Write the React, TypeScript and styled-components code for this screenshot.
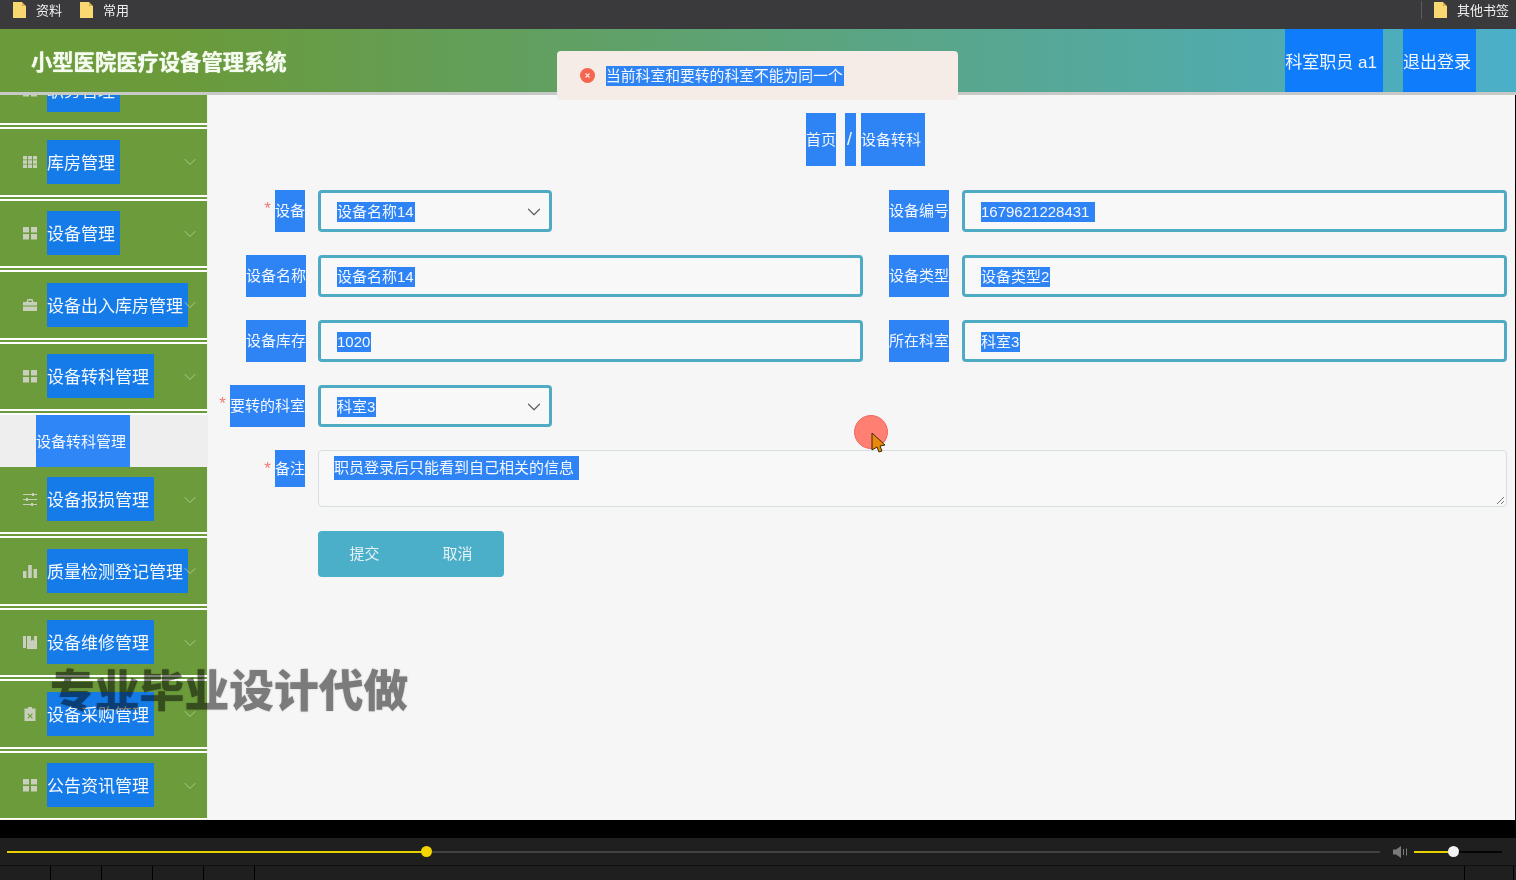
import React from 'react'
import styled, { createGlobalStyle } from 'styled-components'
import { ChevronDown } from 'lucide-react'

const GlobalStyle = createGlobalStyle`
    html, body {
        margin: 0;
        padding: 0;
        background: #000;
    }
    * {
        box-sizing: border-box;
    }
    body {
        font-family: "Liberation Sans", "Noto Sans CJK SC", sans-serif;
    }
`

const Page = styled.div`
    position: relative;
    width: 1516px;
    height: 880px;
    overflow: hidden;
    display: flex;
    flex-direction: column;
`

const BookmarkBar = styled.div`
    height: 29px;
    padding: 0 7px 10px 13px;
    background: #3a393b;
    display: flex;
    align-items: center;
    color: #eeeeee;
    font-size: 13px;
`

const Bookmark = styled.div<{ $last?: boolean }>`
    display: flex;
    align-items: center;
    gap: 10px;
    margin-right: ${props => (props.$last ? 0 : 18)}px;
`

const BarDivider = styled.div`
    width: 1px;
    height: 18px;
    background: #5c5b5d;
    margin-left: auto;
    margin-right: 12px;
`

const Header = styled.header`
    height: 66px;
    flex-shrink: 0;
    padding-left: 31px;
    padding-right: 40px;
    background: linear-gradient(90deg, #6a9a3a 0%, #6a9a3a 12%, #4bafc9 100%);
    border-bottom: 3px solid #c6c9c6;
    display: flex;
    align-items: stretch;
    justify-content: space-between;
`

const Title = styled.h1`
    margin: 0;
    align-self: center;
    color: #f6fbef;
    font-size: 21.3px;
    font-weight: 700;
    text-shadow: 0 0 1px #ffffff;
`

const HeaderActions = styled.div`
    display: flex;
    gap: 20px;
`

const HeaderLink = styled.div<{ $pad: number }>`
    background: #0f7dfb;
    color: #f2f7ff;
    font-size: 17px;
    padding-right: ${props => props.$pad}px;
    display: flex;
    align-items: center;
    white-space: pre;
`

const Main = styled.div`
    flex: 1;
    min-height: 0;
    display: flex;
`

const Sidebar = styled.aside`
    width: 208px;
    flex-shrink: 0;
    overflow: hidden;
    border-right: 1px solid #eef0ea;
    border-bottom: 1px solid #eef0d8;
    background: #6c9b3b;
`

const MenuList = styled.div`
    margin-top: -37.5px;
`

const MenuItem = styled.div`
    position: relative;
    height: 71.5px;
    padding-left: 23px;
    background: #6c9b3b;
    border-bottom: 6px double #ffffff;
    display: flex;
    align-items: center;
    gap: 10px;
`

const MenuIcon = styled.svg`
    width: 14px;
    height: 14px;
    flex-shrink: 0;
    fill: #c8cfbd;
`

const MenuLabel = styled.span`
    height: 44px;
    padding-right: 5px;
    background: #147be8;
    color: #f4f8fd;
    font-size: 17px;
    line-height: 47px;
    white-space: nowrap;
`

const MenuArrow = styled.span`
    position: absolute;
    right: 7px;
    top: 23px;
    display: flex;
    color: #b9d1a0;
`

const SubMenu = styled.div`
    height: 51.5px;
    padding-left: 36px;
    background: #eeeeee;
    display: flex;
`

const SubLabel = styled.span`
    width: 94px;
    background: #2f86f7;
    color: #f4f8fd;
    font-size: 15px;
    line-height: 53px;
    white-space: nowrap;
`

const Content = styled.main`
    flex: 1;
    min-width: 0;
    padding: 18px 8px 0 0;
    background: #f6f6f6;
    border-right: 1px solid #000;
`

const Breadcrumb = styled.nav`
    height: 53px;
    margin-bottom: 24px;
    padding-left: 598px;
    display: flex;
`

const Crumb = styled.span<{ $gap?: number; $width: number }>`
    width: ${props => props.$width}px;
    margin-left: ${props => props.$gap ?? 0}px;
    background: #2f84f5;
    color: #f2f7ff;
    font-size: 15px;
    line-height: 53px;
    white-space: nowrap;
`

const SlashCrumb = styled(Crumb)`
    padding-left: 2px;
    font-size: 18px;
`

const Form = styled.form`
    display: flex;
    flex-direction: column;
    gap: 23px;
`

const FormRow = styled.div`
    display: grid;
    grid-template-columns: 655px 617px;
    column-gap: 27px;
`

const Field = styled.div<{ $labelWidth: number }>`
    display: grid;
    grid-template-columns: ${props => props.$labelWidth}px 1fr;
    column-gap: 13px;
`

const LabelCell = styled.div`
    display: flex;
    justify-content: flex-end;
    align-items: flex-start;
`

const Required = styled.span`
    color: #ef7a70;
    font-size: 17px;
    line-height: 18px;
    margin: 10px 4px 0 0;
`

const Label = styled.label<{ $tall?: boolean; $flush?: boolean }>`
    height: ${props => (props.$tall ? 37 : 42)}px;
    margin-right: ${props => (props.$flush ? -1 : 0)}px;
    background: #2f84f5;
    color: #f2f7ff;
    font-size: 15px;
    line-height: ${props => (props.$tall ? 37 : 42)}px;
    white-space: nowrap;
`

const TextBox = styled.div<{ $short?: boolean }>`
    width: ${props => (props.$short ? '234px' : '100%')};
    height: 42px;
    padding: 2px 4px 0 16px;
    background: #f8f8f8;
    border: 3px solid #4fabc3;
    border-radius: 4px;
    display: flex;
    align-items: center;
    justify-content: space-between;
    color: #606266;
`

const Selected = styled.span`
    padding-right: 1px;
    background: #2f84f5;
    color: #f4f8ff;
    font-size: 15px;
    line-height: 20px;
    white-space: pre;
`

const Remark = styled.div`
    position: relative;
    height: 57px;
    padding: 5px 15px;
    background: #f8f8f8;
    border: 1px solid #d6dfe3;
    border-radius: 4px;
`

const RemarkText = styled(Selected)`
    display: inline-block;
    line-height: 24px;
`

const ResizeGrip = styled.svg`
    position: absolute;
    right: 1px;
    bottom: 1px;
    width: 9px;
    height: 9px;
    stroke: #777777;
    fill: none;
`

const ButtonRow = styled.div`
    padding-left: 110px;
    margin-top: 1px;
    display: flex;
`

const ActionButton = styled.button`
    width: 93px;
    height: 46px;
    padding: 0 0 3px;
    border: none;
    background: #4bafc9;
    color: #e6f2f5;
    font-family: inherit;
    font-size: 15px;
    &:first-child {
        border-radius: 4px 0 0 4px;
    }
    &:last-child {
        border-radius: 0 4px 4px 0;
    }
`

const Toast = styled.div`
    position: absolute;
    left: 557px;
    top: 51px;
    width: 401px;
    height: 49px;
    padding-left: 23px;
    background: #f5ebe7;
    border-radius: 4px;
    display: flex;
    align-items: center;
    gap: 11px;
`

const ToastText = styled(Selected)`
    font-size: 14.8px;
`

const ToastIcon = styled.svg`
    width: 15px;
    height: 15px;
    flex-shrink: 0;
`

const Watermark = styled.div`
    position: absolute;
    left: 50px;
    top: 658px;
    color: #808080;
    font-family: "Noto Sans CJK SC", sans-serif;
    font-size: 44.8px;
    font-weight: 900;
    line-height: 60px;
    white-space: nowrap;
    mix-blend-mode: multiply;
    text-shadow: 0 0 2px #c8c8c8;
`

const CursorHalo = styled.div`
    position: absolute;
    left: 854px;
    top: 415px;
    width: 34px;
    height: 34px;
    border-radius: 50%;
    background: #ff7f72;
    border: 1px solid #ee6a60;
`

const CursorArrow = styled.svg`
    position: absolute;
    left: 871px;
    top: 432px;
    width: 15px;
    height: 21px;
`

const BlackGap = styled.div`
    height: 18px;
    flex-shrink: 0;
    background: #000;
`

const Player = styled.div`
    height: 27px;
    flex-shrink: 0;
    padding: 0 14px 0 7px;
    background: #1f1f1f;
    display: flex;
    align-items: center;
`

const Track = styled.div`
    position: relative;
    height: 2px;
`

const SeekTrack = styled(Track)`
    width: 1373px;
    background: #414141;
`

const VolumeTrack = styled(Track)`
    width: 88px;
    margin-left: 7px;
    background: #050505;
`

const TrackFill = styled.div<{ $width: number }>`
    width: ${props => props.$width}px;
    height: 100%;
    background: #e8cf00;
`

const Knob = styled.div<{ $left: number; $color: string }>`
    position: absolute;
    left: ${props => props.$left}px;
    top: -5px;
    width: 11px;
    height: 11px;
    border-radius: 50%;
    background: ${props => props.$color};
`

const VolumeIcon = styled.svg`
    width: 14px;
    height: 14px;
    margin-left: 13px;
    fill: #7a7a7a;
`

const BottomBar = styled.div`
    height: 15px;
    flex-shrink: 0;
    background: #1f1f1f;
    border-top: 1px solid #111111;
    display: flex;
`

const BottomCell = styled.div`
    width: 51px;
    border-right: 1px solid #000;
`

const BottomEnd = styled.div`
    width: 50px;
    margin-left: auto;
    margin-right: 2px;
    border-left: 1px solid #000;
    border-right: 1px solid #000;
`

function Folder() {
    return (
        <svg width="13" height="16" viewBox="0 0 13 16">
            <path d="M0 0h9v3l1 1h3v12H0z" fill="#f9d871" />
            <path d="M9 0v3l1 1h3z" fill="#e0b850" />
        </svg>
    )
}

type IconKind = 'dense' | 'grid' | 'case' | 'sliders' | 'bars' | 'book' | 'clip'

const iconPaths: Record<IconKind, string> = {
    dense: 'M0 1h4v3.5H0zM5 1h4v3.5H5zM10 1h4v3.5h-4zM0 5.3h4v3.5H0zM5 5.3h4v3.5H5zM10 5.3h4v3.5h-4zM0 9.6h4v3.5H0zM5 9.6h4v3.5H5zM10 9.6h4v3.5h-4z',
    grid: 'M0 1h6v5.5H0zM8 1h6v5.5H8zM0 8h6v5.5H0zM8 8h6v5.5H8z',
    case: 'M4.5 1h5l1 3H14v3.5H0V4h3.5zM5.5 2.4 5 4h4l-.5-1.6zM0 8.5h14V13H0z',
    sliders: 'M0 2h9V1h2v1h3v1h-3v1H9V3H0zM0 7h3V6h2v1h9v1H5v1H3V8H0zM0 12h8v-1h2v1h4v1h-4v1H8v-1H0z',
    bars: 'M0 7h3.5v7H0zM5.2 1h3.6v13H5.2zM10.5 5H14v9h-3.5z',
    book: 'M0 1h3v12H0zM4 1h4v5l1.5-1.5L11 6V1h3v13H4z',
    clip: 'M5 0h4v1.5h3.5V14h-11V1.5H5zM5.2 6.2 4.4 7 6.3 9l-1.900 2 .8.8L7.100 9.800l1.900 2 .8-.8L7.900 9l1.900-2-.8-.8-1.900 2z',
}

const menus: { kind: IconKind; text: string; open?: boolean }[] = [
    { kind: 'grid', text: '职务管理' },
    { kind: 'dense', text: '库房管理' },
    { kind: 'grid', text: '设备管理' },
    { kind: 'case', text: '设备出入库房管理' },
    { kind: 'grid', text: '设备转科管理', open: true },
    { kind: 'sliders', text: '设备报损管理' },
    { kind: 'bars', text: '质量检测登记管理' },
    { kind: 'book', text: '设备维修管理' },
    { kind: 'clip', text: '设备采购管理' },
    { kind: 'grid', text: '公告资讯管理' },
]

function App() {
    return (
        <Page>
            <GlobalStyle />
            <BookmarkBar>
                <Bookmark><Folder />资料</Bookmark>
                <Bookmark><Folder />常用</Bookmark>
                <BarDivider />
                <Bookmark $last><Folder />其他书签</Bookmark>
            </BookmarkBar>
            <Header>
                <Title>小型医院医疗设备管理系统</Title>
                <HeaderActions>
                    <HeaderLink $pad={6}>科室职员 a1</HeaderLink>
                    <HeaderLink $pad={5}>退出登录</HeaderLink>
                </HeaderActions>
            </Header>
            <Main>
                <Sidebar>
                    <MenuList>
                        {menus.map(menu => (
                            <React.Fragment key={menu.text}>
                                <MenuItem>
                                    <MenuIcon viewBox="0 0 14 14">
                                        <path d={iconPaths[menu.kind]} fillRule="evenodd" />
                                    </MenuIcon>
                                    <MenuLabel>{menu.text}</MenuLabel>
                                    <MenuArrow><ChevronDown size={20} strokeWidth={1} /></MenuArrow>
                                </MenuItem>
                                {menu.open && (
                                    <SubMenu><SubLabel>{menu.text}</SubLabel></SubMenu>
                                )}
                            </React.Fragment>
                        ))}
                    </MenuList>
                </Sidebar>
                <Content>
                    <Breadcrumb>
                        <Crumb $width={30}>首页</Crumb>
                        <SlashCrumb $width={11} $gap={9}>/</SlashCrumb>
                        <Crumb $width={64} $gap={5}>设备转科</Crumb>
                    </Breadcrumb>
                    <Form>
                        <FormRow>
                            <Field $labelWidth={97}>
                                <LabelCell><Required>*</Required><Label>设备</Label></LabelCell>
                                <TextBox $short>
                                    <Selected>设备名称14</Selected>
                                    <ChevronDown size={22} strokeWidth={1.3} />
                                </TextBox>
                            </Field>
                            <Field $labelWidth={59}>
                                <LabelCell><Label>设备编号</Label></LabelCell>
                                <TextBox><Selected>1679621228431 </Selected></TextBox>
                            </Field>
                        </FormRow>
                        <FormRow>
                            <Field $labelWidth={97}>
                                <LabelCell><Label $flush>设备名称</Label></LabelCell>
                                <TextBox><Selected>设备名称14</Selected></TextBox>
                            </Field>
                            <Field $labelWidth={59}>
                                <LabelCell><Label>设备类型</Label></LabelCell>
                                <TextBox><Selected>设备类型2</Selected></TextBox>
                            </Field>
                        </FormRow>
                        <FormRow>
                            <Field $labelWidth={97}>
                                <LabelCell><Label $flush>设备库存</Label></LabelCell>
                                <TextBox><Selected>1020</Selected></TextBox>
                            </Field>
                            <Field $labelWidth={59}>
                                <LabelCell><Label>所在科室</Label></LabelCell>
                                <TextBox><Selected>科室3</Selected></TextBox>
                            </Field>
                        </FormRow>
                        <FormRow>
                            <Field $labelWidth={97}>
                                <LabelCell><Required>*</Required><Label>要转的科室</Label></LabelCell>
                                <TextBox $short>
                                    <Selected>科室3</Selected>
                                    <ChevronDown size={22} strokeWidth={1.3} />
                                </TextBox>
                            </Field>
                        </FormRow>
                        <Field $labelWidth={97}>
                            <LabelCell><Required>*</Required><Label $tall>备注</Label></LabelCell>
                            <Remark>
                                <RemarkText>职员登录后只能看到自己相关的信息 </RemarkText>
                                <ResizeGrip viewBox="0 0 9 9">
                                    <path d="M1 8 8 1M5 8l3-3" />
                                </ResizeGrip>
                            </Remark>
                        </Field>
                        <ButtonRow>
                            <ActionButton type="button">提交</ActionButton>
                            <ActionButton type="button">取消</ActionButton>
                        </ButtonRow>
                    </Form>
                </Content>
            </Main>
            <BlackGap />
            <Player>
                <SeekTrack>
                    <TrackFill $width={419} />
                    <Knob $left={414} $color="#f5d500" />
                </SeekTrack>
                <VolumeIcon viewBox="0 0 14 14">
                    <path d="M0 4.500h3L8 1v12L3 9.500H0zM10 4h1v6h-1zM13 3.500h1v7h-1z" />
                </VolumeIcon>
                <VolumeTrack>
                    <TrackFill $width={39} />
                    <Knob $left={34} $color="#f2f2f2" />
                </VolumeTrack>
            </Player>
            <BottomBar>
                <BottomCell />
                <BottomCell />
                <BottomCell />
                <BottomCell />
                <BottomCell />
                <BottomEnd />
            </BottomBar>
            <Toast>
                <ToastIcon viewBox="0 0 15 15">
                    <circle cx="7.500" cy="7.500" r="7.500" fill="#f5654f" />
                    <path d="M5.500 5.500l4 4M9.500 5.500l-4 4" stroke="#fbe9e5" strokeWidth="1.200" />
                </ToastIcon>
                <ToastText>当前科室和要转的科室不能为同一个</ToastText>
            </Toast>
            <CursorHalo />
            <CursorArrow viewBox="0 0 15 21">
                <path d="M1 1 14 13 9 14 11 19 8 20 6 15 1 18z" fill="#e8890c" stroke="#3a2a00" strokeWidth="1" />
            </CursorArrow>
            <Watermark>专业毕业设计代做</Watermark>
        </Page>
    )
}

export default App
